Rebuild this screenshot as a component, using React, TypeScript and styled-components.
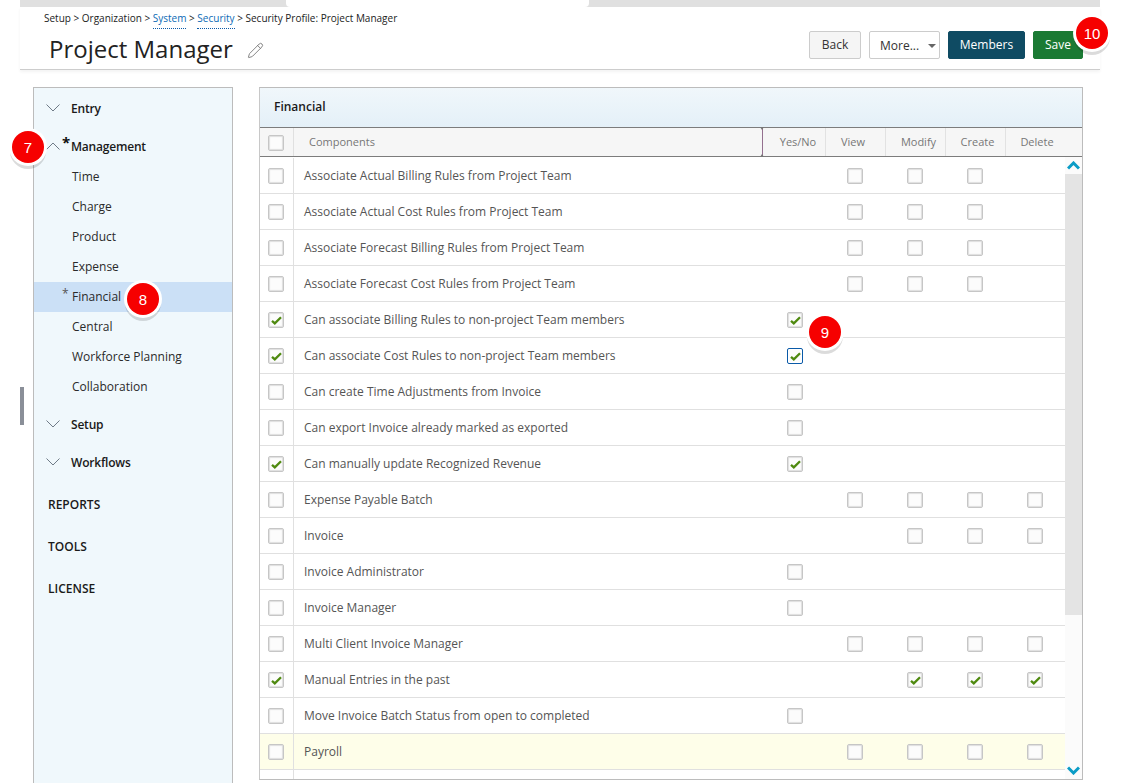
import React from "react";
import styled, { createGlobalStyle } from "styled-components";
import { Pencil } from "lucide-react";

const Global = createGlobalStyle`
  html, body { margin: 0; padding: 0; background: #fff; }
  body { font-family: "Open Sans", "Liberation Sans", sans-serif; font-size: 12px; color: #333; }
  * { box-sizing: border-box; }
`;

const Page = styled.div`
  position: relative;
  width: 1121px;
  height: 783px;
  overflow: hidden;
`;

const TopStrip = styled.div`
  display: flex;
  height: 7px;
  margin: 0 21px 0 20px;
  background: #e0e0e0;
`;
const StripNotch = styled.div`
  width: 303px;
  margin-left: 266px;
  background: #fff;
  border-radius: 0 0 4px 4px;
`;

const Header = styled.header`
  display: flex;
  justify-content: space-between;
  height: 63px;
  margin: 0 21px 0 20px;
  border-bottom: 1px solid #cdcdcd;
  box-shadow: 0 2px 3px rgba(0, 0, 0, 0.05);
`;
const HeaderLeft = styled.div`
  display: flex;
  flex-direction: column;
`;
const Crumbs = styled.div`
  margin: 4px 0 0 24px;
  font-size: 10px;
  line-height: 14px;
  color: #222;
`;
const CrumbLink = styled.span`
  color: #0b6ab5;
  border-bottom: 1px dotted #0b5aa8;
  padding-bottom: 3px;
`;
const TitleRow = styled.div`
  display: flex;
  align-items: center;
  gap: 14px;
  margin: 7px 0 0 29px;
`;
const Title = styled.h1`
  margin: 0;
  font-size: 24px;
  line-height: 34px;
  font-weight: 400;
  color: #222;
`;
const EditIcon = styled(Pencil)`
  color: #707070;
  margin-top: 3px;
`;
const Actions = styled.div`
  display: flex;
  gap: 8px;
  margin: 24px 17px 0 0;
`;
const Btn = styled.button<{ $w: number; $bg: string; $fg: string; $line: string }>`
  width: ${(p) => p.$w}px;
  height: 28px;
  padding: 0 0 1px;
  font-family: inherit;
  font-size: 12px;
  background: ${(p) => p.$bg};
  color: ${(p) => p.$fg};
  border: 1px solid ${(p) => p.$line};
  border-radius: 2px;
`;
const SelectBox = styled.div`
  display: flex;
  align-items: center;
  justify-content: space-between;
  width: 71px;
  height: 28px;
  padding: 1px 3px 0 10px;
  background: #fff;
  color: #333;
  border: 1px solid #ccc;
  border-radius: 2px;
`;
const Caret = styled.span`
  width: 0;
  height: 0;
  border-left: 4px solid transparent;
  border-right: 4px solid transparent;
  border-top: 4px solid #666;
`;

const Main = styled.main`
  display: flex;
  align-items: flex-start;
  gap: 26px;
  padding: 17px 0 0 33px;
`;

const Sidebar = styled.nav`
  width: 200px;
  height: 720px;
  padding-top: 1px;
  background: #f0f8fc;
  border: 1px solid #bcbcbc;
`;
const GroupHead = styled.div`
  display: flex;
  align-items: center;
  position: relative;
  height: 38px;
  padding-left: 12px;
  gap: 11px;
  font-weight: 600;
  letter-spacing: -0.2px;
  color: #1a1a1a;
`;
const Star = styled.span<{ $strong?: boolean }>`
  position: absolute;
  left: 28px;
  top: ${(p) => (p.$strong ? "7px" : "4px")};
  font-size: ${(p) => (p.$strong ? "15px" : "12px")};
  font-weight: ${(p) => (p.$strong ? 700 : 400)};
  line-height: 16px;
  color: ${(p) => (p.$strong ? "#111" : "#555")};
`;
const SubList = styled.div`
  margin-top: -3px;
  margin-bottom: 3px;
`;
const SubItem = styled.div<{ $active?: boolean }>`
  position: relative;
  height: 30px;
  line-height: 30px;
  padding-left: 38px;
  color: #2a2a2a;
  background: ${(p) => (p.$active ? "#cbe0f6" : "transparent")};
`;
const TopLink = styled.div`
  height: 42px;
  line-height: 42px;
  padding-left: 14px;
  font-weight: 600;
  color: #1a1a1a;
`;
const SpacerLink = styled.div`
  height: 3px;
`;
const Handle = styled.div`
  position: absolute;
  left: 20px;
  top: 387px;
  width: 4px;
  height: 38px;
  background: #8a8f98;
`;

const Panel = styled.section`
  display: flex;
  flex-direction: column;
  width: 824px;
  height: 693px;
  background: #fff;
  border: 1px solid #bcbcbc;
  border-left-color: #c8c8c8;
`;
const PanelTitle = styled.div`
  height: 39px;
  padding: 0 14px;
  line-height: 37px;
  font-weight: 600;
  color: #1a1a1a;
  background: linear-gradient(#f0f7fb, #e4f0f8);
`;
const HeadRow = styled.div`
  display: grid;
  grid-template-columns: 34px 471px repeat(5, 60px) 1fr;
  height: 30px;
  background: #f6f6f6;
  border-top: 1px solid #7c7c7c;
  border-bottom: 1px solid #7c7c7c;
  color: #777;
  font-size: 11px;
`;
const HeadCell = styled.div<{ $shift?: number; $divider?: boolean }>`
  display: flex;
  align-items: center;
  justify-content: center;
  padding-bottom: 2px;
  padding-left: ${(p) => (p.$shift && p.$shift > 0 ? p.$shift : 0)}px;
  padding-right: ${(p) => (p.$shift && p.$shift < 0 ? -p.$shift : 0)}px;
  border-left: ${(p) => (p.$divider ? "1px solid #e2e2e2" : "0")};
`;
const HeadName = styled.div`
  position: relative;
  display: flex;
  align-items: center;
  padding: 0 0 2px 15px;
`;
const ResizeBar = styled.span`
  position: absolute;
  left: 468px;
  top: -1px;
  bottom: -1px;
  width: 1px;
  background: #94708f;
  &::before,
  &::after {
    content: "";
    position: absolute;
    left: -2px;
    border-left: 2.5px solid transparent;
    border-right: 2.5px solid transparent;
  }
  &::before {
    top: 0;
    border-top: 3px solid #777;
  }
  &::after {
    bottom: 0;
    border-bottom: 3px solid #777;
  }
`;
const Body = styled.div`
  flex: 1;
  display: flex;
  min-height: 0;
  overflow: hidden;
`;
const Rows = styled.div`
  flex: 1;
  padding-top: 1px;
  overflow: hidden;
`;
const Row = styled.div<{ $hl?: boolean }>`
  display: grid;
  grid-template-columns: 34px 471px repeat(5, 60px);
  flex: none;
  height: 36px;
  border-bottom: 1px solid #e0e0e0;
  background: ${(p) => (p.$hl ? "#fefee9" : "#fff")};
  color: #555;
`;
const BoxCell = styled.div<{ $rule?: boolean }>`
  display: flex;
  align-items: center;
  justify-content: center;
  padding-top: 1px;
  padding-right: ${(p) => (p.$rule ? "1px" : "0")};
  border-right: ${(p) => (p.$rule ? "1px solid #e0e0e0" : "0")};
`;
const NameCell = styled.div`
  display: flex;
  align-items: center;
  padding-left: 10px;
`;
const Box = styled.span<{ $focus?: boolean }>`
  display: flex;
  align-items: center;
  justify-content: center;
  width: 16px;
  height: 16px;
  padding: 1px 0 0 1px;
  background: #fcfcfc;
  border: 1px solid ${(p) => (p.$focus ? "#0a5aa8" : "#c6c6c6")};
  border-radius: 2px;
  box-shadow: inset 0 0 1px 1px ${(p) => (p.$focus ? "#fff" : "#dedede")};
`;
const Scroll = styled.div`
  display: flex;
  flex-direction: column;
  width: 17px;
  background: #fbfbfb;
`;
const ScrollBtn = styled.div`
  display: flex;
  align-items: center;
  justify-content: center;
  height: 17px;
  flex: none;
`;
const ScrollThumb = styled.div`
  height: 441px;
  flex: none;
  background: #e4e4e4;
`;
const ScrollFill = styled.div`
  flex: 1;
`;

const Badge = styled.div<{ $x: number; $y: number }>`
  position: absolute;
  left: ${(p) => p.$x - 16}px;
  top: ${(p) => p.$y - 16}px;
  display: flex;
  align-items: center;
  justify-content: center;
  width: 32px;
  height: 32px;
  background: #f60000;
  color: #fff;
  font-family: "Liberation Sans", Arial, sans-serif;
  font-size: 15px;
  border-radius: 50%;
  box-shadow: 0 0 0 3px #fff, 0 4px 0 2px rgba(0, 0, 0, 0.14);
`;

const Check = () => (
  <svg width="11" height="9" viewBox="0 0 11 9">
    <path d="M1 4.8 L3.8 7.4 L10 1.2" fill="none" stroke="#4f8a10" strokeWidth="2.3" />
  </svg>
);
const Chevron = ({ up }: { up?: boolean }) => (
  <svg width="14" height="8" viewBox="0 0 14 8">
    <path d={up ? "M0.5 7.5 L7 1 L13.5 7.5" : "M0.5 0.5 L7 7 L13.5 0.5"} fill="none" stroke="#6f7b87" strokeWidth="1" />
  </svg>
);
const ScrollArrow = ({ up }: { up?: boolean }) => (
  <svg width="13" height="9" viewBox="0 0 13 9">
    <path d={up ? "M1 7.5 L6.5 2 L12 7.5" : "M1 1.5 L6.5 7 L12 1.5"} fill="none" stroke="#0a9cc6" strokeWidth="3" />
  </svg>
);

const CheckBox = ({ on, focus }: { on?: boolean; focus?: boolean }) => (
  <Box $focus={focus}>{on && <Check />}</Box>
);

const rows: { name: string; on?: boolean; cols: string; hl?: boolean }[] = [
  { name: "Associate Actual Billing Rules from Project Team", cols: "-ooo-" },
  { name: "Associate Actual Cost Rules from Project Team", cols: "-ooo-" },
  { name: "Associate Forecast Billing Rules from Project Team", cols: "-ooo-" },
  { name: "Associate Forecast Cost Rules from Project Team", cols: "-ooo-" },
  { name: "Can associate Billing Rules to non-project Team members", on: true, cols: "x----" },
  { name: "Can associate Cost Rules to non-project Team members", on: true, cols: "f----" },
  { name: "Can create Time Adjustments from Invoice", cols: "o----" },
  { name: "Can export Invoice already marked as exported", cols: "o----" },
  { name: "Can manually update Recognized Revenue", on: true, cols: "x----" },
  { name: "Expense Payable Batch", cols: "-oooo" },
  { name: "Invoice", cols: "--ooo" },
  { name: "Invoice Administrator", cols: "o----" },
  { name: "Invoice Manager", cols: "o----" },
  { name: "Multi Client Invoice Manager", cols: "-oooo" },
  { name: "Manual Entries in the past", on: true, cols: "--xxx" },
  { name: "Move Invoice Batch Status from open to completed", cols: "o----" },
  { name: "Payroll", cols: "-oooo", hl: true },
];

const heads: { label: string; shift: number; divider: boolean }[] = [
  { label: "Yes/No", shift: 6, divider: false },
  { label: "View", shift: -5, divider: true },
  { label: "Modify", shift: 6, divider: true },
  { label: "Create", shift: 4, divider: true },
  { label: "Delete", shift: 3, divider: true },
];

const subItems = ["Time", "Charge", "Product", "Expense", "Financial", "Central", "Workforce Planning", "Collaboration"];

export default function App() {
  return (
    <Page>
      <Global />
      <TopStrip>
        <StripNotch />
      </TopStrip>
      <Header>
        <HeaderLeft>
          <Crumbs>
            Setup &gt; Organization &gt; <CrumbLink>System</CrumbLink> &gt; <CrumbLink>Security</CrumbLink> &gt; Security Profile: Project Manager
          </Crumbs>
          <TitleRow>
            <Title>Project Manager</Title>
            <EditIcon size={17} strokeWidth={1.2} />
          </TitleRow>
        </HeaderLeft>
        <Actions>
          <Btn $w={52} $bg="#f5f5f5" $fg="#333" $line="#ccc">Back</Btn>
          <SelectBox>
            More...
            <Caret />
          </SelectBox>
          <Btn $w={77} $bg="#0f4b63" $fg="#fff" $line="#0f4b63">Members</Btn>
          <Btn $w={50} $bg="#1b7a34" $fg="#fff" $line="#1b7a34">Save</Btn>
        </Actions>
      </Header>
      <Main>
        <Sidebar>
          <GroupHead><Chevron />Entry</GroupHead>
          <GroupHead><Chevron up /><Star $strong>*</Star>Management</GroupHead>
          <SubList>
            {subItems.map((s) => (
              <SubItem key={s} $active={s === "Financial"}>
                {s === "Financial" && <Star>*</Star>}
                {s}
              </SubItem>
            ))}
          </SubList>
          <GroupHead><Chevron />Setup</GroupHead>
          <GroupHead><Chevron />Workflows</GroupHead>
          <SpacerLink />
          <TopLink>REPORTS</TopLink>
          <TopLink>TOOLS</TopLink>
          <TopLink>LICENSE</TopLink>
        </Sidebar>
        <Panel>
          <PanelTitle>Financial</PanelTitle>
          <HeadRow>
            <BoxCell $rule><CheckBox /></BoxCell>
            <HeadName>Components<ResizeBar /></HeadName>
            {heads.map((h) => (
              <HeadCell key={h.label} $shift={h.shift} $divider={h.divider}>{h.label}</HeadCell>
            ))}
          </HeadRow>
          <Body>
            <Rows>
              {rows.map((r) => (
                <Row key={r.name} $hl={r.hl}>
                  <BoxCell $rule><CheckBox on={r.on} /></BoxCell>
                  <NameCell>{r.name}</NameCell>
                  {r.cols.split("").map((c, i) => (
                    <BoxCell key={i}>
                      {c !== "-" && <CheckBox on={c === "x" || c === "f"} focus={c === "f"} />}
                    </BoxCell>
                  ))}
                </Row>
              ))}
              <Row>
                <BoxCell $rule />
              </Row>
            </Rows>
            <Scroll>
              <ScrollBtn><ScrollArrow up /></ScrollBtn>
              <ScrollThumb />
              <ScrollFill />
              <ScrollBtn><ScrollArrow /></ScrollBtn>
            </Scroll>
          </Body>
        </Panel>
      </Main>
      <Handle />
      <Badge $x={28} $y={147}>7</Badge>
      <Badge $x={143} $y={299}>8</Badge>
      <Badge $x={825} $y={332}>9</Badge>
      <Badge $x={1092} $y={33}>10</Badge>
    </Page>
  );
}
